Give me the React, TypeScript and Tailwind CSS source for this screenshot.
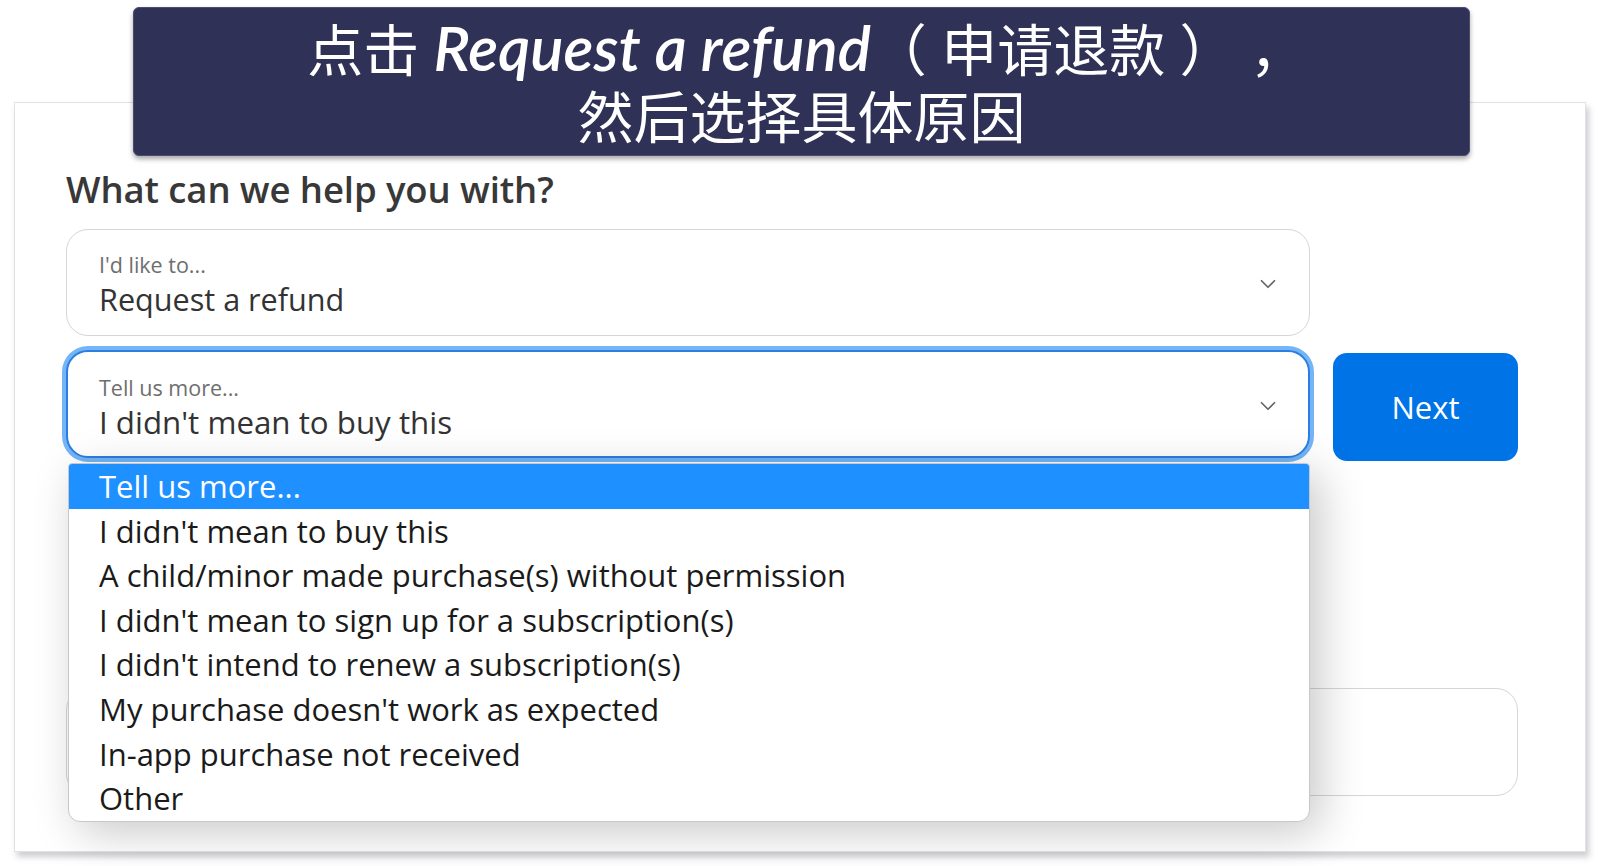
import { ChevronDown } from 'lucide-react';

const REASONS: string[] = [
  "I didn't mean to buy this",
  'A child/minor made purchase(s) without permission',
  "I didn't mean to sign up for a subscription(s)",
  "I didn't intend to renew a subscription(s)",
  "My purchase doesn't work as expected",
  'In-app purchase not received',
  'Other',
];

const UI_FONT = "font-['Open_Sans','Noto_Sans',sans-serif]";

export default function App() {
  return (
    <div className={`relative w-[1599px] h-[866px] overflow-hidden bg-white ${UI_FONT}`}>
      {/* Form card */}
      <div className="ml-[14px] mt-[102px] w-[1572px] h-[750px] border border-[#e2e2e6] bg-white shadow-[3px_5px_6px_rgba(60,60,80,0.25)] pl-[51px] pt-[62px]">
        <h2 className="text-[36.5px] leading-[48px] text-[#383838] font-semibold tracking-[-0.1px]">
          What can we help you with?
        </h2>

        {/* First select */}
        <div className="mt-[16px] w-[1244px] h-[107px] rounded-[22px] border border-[#d6d6da] bg-white flex items-center justify-between pl-[32px] pr-[28px]">
          <div className="flex flex-col pt-[6px]">
            <span className="text-[21.5px] leading-[26px] text-[#6e6e6e]">I'd like to...</span>
            <span className="text-[30.6px] leading-[42px] text-[#333]">Request a refund</span>
          </div>
          <ChevronDown className="w-[26px] h-[26px] text-[#666] mt-[2px]" strokeWidth={1.6} />
        </div>

        {/* Second select + Next */}
        <div className="mt-[14px] flex items-start gap-[23px]">
          <div className="relative">
            <div className="w-[1244px] h-[108px] rounded-[22px] border-2 border-[#2a7fe0] ring-4 ring-[#74b4f7] bg-white flex items-center justify-between pl-[31px] pr-[27px]">
              <div className="flex flex-col pt-[10px]">
                <span className="text-[21.5px] leading-[26px] text-[#6e6e6e]">Tell us more...</span>
                <span className="text-[31.3px] leading-[42px] text-[#333]">I didn't mean to buy this</span>
              </div>
              <ChevronDown className="w-[26px] h-[26px] text-[#666] mt-[4px]" strokeWidth={1.6} />
            </div>

            {/* Open dropdown list */}
            <div className="absolute left-[2px] top-[113px] z-10 w-[1242px] bg-white rounded-b-[12px] rounded-t-[4px] border border-[#c8c8cc] overflow-hidden shadow-[10px_10px_45px_rgba(0,0,0,0.22)]">
              <div className="h-[44.6px] leading-[44.6px] bg-[#1e90ff] text-white text-[31px] pl-[30px]">
                Tell us more...
              </div>
              {REASONS.map((r) => (
                <div key={r} className="h-[44.6px] leading-[44.6px] text-[#1a1a1a] text-[31px] pl-[30px]">
                  {r}
                </div>
              ))}
            </div>
          </div>

          <button className="mt-[3px] w-[185px] h-[108px] rounded-[14px] bg-[#0073e6] text-white text-[31px] font-medium">
            Next
          </button>
        </div>

        {/* Text area behind the list */}
        <div className="mt-[227px] w-[1452px] h-[108px] rounded-[22px] border border-[#d6d6da]" />
      </div>

      {/* Caption banner */}
      <div className="absolute left-[133px] top-[7px] w-[1337px] h-[149px] rounded-[6px] bg-[#2f3157] border border-[#4a4c70] shadow-[0_3px_5px_rgba(0,0,0,0.35)] flex flex-col items-center justify-center text-white text-[56px] leading-[67px] font-['Lato','Noto_Sans_CJK_SC',sans-serif]">
        <div className="pl-[10px] whitespace-pre">
          点击 <span className="italic font-semibold text-[62px]">Request a refund</span>（ 申请退款 ） ，
        </div>
        <div>然后选择具体原因</div>
      </div>
    </div>
  );
}
